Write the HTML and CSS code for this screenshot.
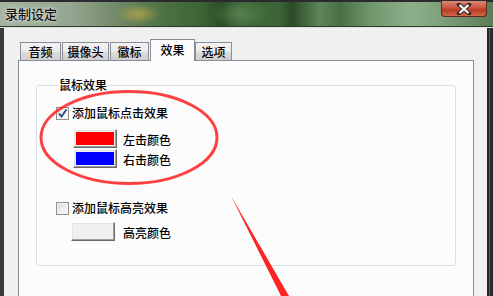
FILE: index.html
```html
<!DOCTYPE html>
<html lang="zh-CN">
<head>
  <meta charset="UTF-8">
  <title>录制设定</title>
  <link rel="stylesheet" href="styles.css">
</head>
<body>
  <div class="window">
    <div class="titlebar">
      <span class="title">录制设定</span>
      <button class="close-btn">
        <svg width="16" height="12" viewBox="0 0 16 12">
          <path d="M3 1.5 L13 10.5 M13 1.5 L3 10.5" stroke="#3a2a26" stroke-width="4" stroke-linecap="square"/>
          <path d="M3.5 2 L12.5 10 M12.5 2 L3.5 10" stroke="#ffffff" stroke-width="2.2"/>
        </svg>
      </button>
    </div>

    <div class="frame">
      <div class="frame-left"></div>
      <div class="client">
        <div class="tabs">
          <div class="tab tab-audio">音频</div>
          <div class="tab tab-camera">摄像头</div>
          <div class="tab tab-logo">徽标</div>
          <div class="tab tab-effect active">效果</div>
          <div class="tab tab-option">选项</div>
        </div>

        <div class="tab-panel">
          <fieldset class="group">
            <legend>鼠标效果</legend>

            <div class="check-row">
              <span class="checkbox checked">
                <svg width="11" height="11" viewBox="0 0 11 11">
                  <path d="M2 5.5 L4.5 8.5 L9.5 1.5" fill="none" stroke="#2c4485" stroke-width="1.8"/>
                </svg>
              </span>
              <span>添加鼠标点击效果</span>
            </div>
            <div class="color-row first">
              <button class="color-btn"><span class="swatch red"></span></button>
              <span class="color-label">左击颜色</span>
            </div>
            <div class="color-row">
              <button class="color-btn"><span class="swatch blue"></span></button>
              <span class="color-label">右击颜色</span>
            </div>

            <div class="check-row second">
              <span class="checkbox"></span>
              <span>添加鼠标高亮效果</span>
            </div>
            <div class="color-row highlight">
              <button class="color-btn"><span class="swatch plain"></span></button>
              <span class="color-label">高亮颜色</span>
            </div>
          </fieldset>
        </div>
      </div>
      <div class="frame-right"></div>
    </div>

    <!-- red marks drawn over the dialog -->
    <svg class="annotation" width="493" height="296" viewBox="0 0 493 296">
      <ellipse cx="129" cy="137.5" rx="88" ry="46" fill="none" stroke="#ff2b2b" stroke-width="3" opacity="0.9"/>
      <polygon points="231,196 289,296 281,296" fill="#ff2424"/>
    </svg>
  </div>
</body>
</html>
```

FILE: styles.css
```css
* {
  margin: 0;
  padding: 0;
  box-sizing: border-box;
}

body {
  width: 493px;
  height: 296px;
  overflow: hidden;
  font-family: "Noto Sans CJK SC", "Noto Sans", sans-serif;
  font-size: 12px;
  font-weight: 500;
  color: #000;
  background: #2e2e2e;
}

.window {
  position: relative;
  width: 493px;
  height: 296px;
  display: flex;
  flex-direction: column;
}

.titlebar {
  height: 27px;
  flex-shrink: 0;
  display: flex;
  justify-content: space-between;
  align-items: flex-start;
  border-top: 2px solid #2b2a31;
  border-bottom: 1px solid #2f3a2c;
  box-shadow: 0 1px 0 #e2e6e0;
  background:
    radial-gradient(ellipse 22px 10px at 138px 12px, rgba(190, 170, 70, 0.75), rgba(190, 170, 70, 0)),
    radial-gradient(ellipse 30px 14px at 240px 12px, rgba(110, 150, 100, 0.5), rgba(110, 150, 100, 0)),
    linear-gradient(to right, #a6b3a2 0px, #95a690 70px, #6f8766 120px, #4d7043 165px, #3c6534 200px, #2d4d29 222px, #3f6937 240px, #3c6436 280px, #2c4a28 292px, #5d8659 320px, #496f44 340px, #6f956b 370px, #8db08a 410px, #7fa07b 440px, #5c7c58 493px);
}

.title {
  margin: 4px 0 0 5px;
  font-size: 13px;
  line-height: 16px;
  color: #111;
  text-shadow: 0 0 5px rgba(255, 255, 255, 0.8), 0 0 2px rgba(255, 255, 255, 0.6);
}

.close-btn {
  width: 46px;
  height: 16px;
  margin-right: 6px;
  margin-top: -1px;
  border: 1px solid #5a2a20;
  border-top: none;
  border-radius: 0 0 4px 4px;
  background: linear-gradient(to bottom, #d98a78 0%, #c9553d 45%, #b83b22 60%, #cf6a4a 100%);
  display: flex;
  align-items: center;
  justify-content: center;
}

.frame {
  flex: 1;
  display: flex;
  margin-top: 1px;
}

.frame-left {
  width: 4px;
  background: #3a3a3a;
}

.frame-right {
  width: 6px;
  background: #2a2a2a;
  border-left: 2px solid #262626;
  box-shadow: inset 1px 0 0 #4f6a4c;
}

.client {
  flex: 1;
  background: #f0f0f0;
  padding: 11px 13px 0 14px;
  display: flex;
  flex-direction: column;
}

/* tab header */
.tabs {
  height: 21px;
  display: flex;
  align-items: flex-end;
  padding-left: 2px;
}

.tab {
  height: 18px;
  border: 1px solid #898c95;
  border-bottom: none;
  background: linear-gradient(to bottom, #f3f3f3 0%, #ebebeb 50%, #dddddd 51%, #cfcfcf 100%);
  line-height: 17px;
  text-align: center;
  font-size: 12px;
}

.tab-audio { width: 41px; }
.tab-camera { width: 47px; margin-left: 1px; }
.tab-logo { width: 39px; margin-left: 1px; }
.tab-option { width: 37px; }

.tab.active {
  width: 45px;
  height: 22px;
  margin-left: 1px;
  margin-bottom: -1px;
  background: #fcfcfc;
  line-height: 20px;
  position: relative;
  z-index: 1;
}

.tab-panel {
  height: 250px;
  background: #fcfcfc;
  border: 1px solid #898c95;
  padding: 17px 17px 0 17px;
}

/* group box */
.group {
  border: 1px solid #d5dfe5;
  border-radius: 3px;
  padding: 14px 0 24px 19px;
}

.group legend {
  margin-left: 2px;
  padding: 0 1px;
  line-height: 14px;
  font-size: 12px;
}

.check-row {
  height: 14px;
  display: flex;
  align-items: center;
  gap: 3px;
  line-height: 14px;
}

.check-row.second {
  margin-top: 33px;
}

.checkbox {
  width: 13px;
  height: 13px;
  border: 1px solid #8f8f8f;
  background: linear-gradient(135deg, #d4d6da 0%, #eef0f2 60%, #fafafa 100%);
  box-shadow: inset 0 0 0 1px #f4f4f4;
  display: flex;
  align-items: center;
  justify-content: center;
}

.checkbox.checked {
  background: linear-gradient(135deg, #dcdfe4 0%, #f2f3f5 60%, #fbfbfb 100%);
}

.color-row {
  height: 19px;
  display: flex;
  align-items: center;
  margin-top: 1px;
  padding-left: 17px;
}

.color-row.first {
  margin-top: 9px;
}

.color-row.highlight {
  margin-top: 7px;
  padding-left: 15px;
}

.color-btn {
  width: 44px;
  height: 19px;
  border: 1px solid;
  border-color: #ffffff #696969 #696969 #ffffff;
  box-shadow: inset -1px -1px 0 #a0a0a0, inset 1px 1px 0 #e3e3e3;
  background: #f0f0f0;
  padding: 2px 2px 2px 2px;
  display: flex;
}

.swatch {
  flex: 1;
}

.swatch.red { background: #ff0000; }
.swatch.blue { background: #0000ff; }
.swatch.plain { background: #f0f0f0; }

.color-label {
  margin-left: 6px;
  line-height: 14px;
  padding-top: 2px;
}

.color-row.highlight .color-label {
  margin-left: 8px;
}

.annotation {
  position: absolute;
  left: 0;
  top: 0;
  pointer-events: none;
}
```
